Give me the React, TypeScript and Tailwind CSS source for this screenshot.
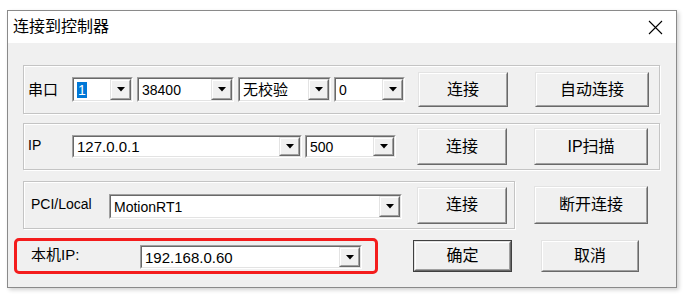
import type { ReactNode } from 'react';

const font = 'font-["Liberation_Sans","Noto_Sans_CJK_SC",sans-serif]';

function Arrow() {
  return (
    <svg width="8" height="5" viewBox="0 0 8 5">
      <polygon points="0,0 8,0 4,4.5" fill="#000" />
    </svg>
  );
}

// sunken classic combobox with a raised drop button
function Combo({ className, children }: { className: string; children: ReactNode }) {
  return (
    <div className={`${className} flex border border-t-[#a0a0a0] border-l-[#a0a0a0] border-b-white border-r-white`}>
      <div className="flex flex-1 border border-t-[#696969] border-l-[#696969] border-b-[#e3e3e3] border-r-[#e3e3e3] bg-white">
        <div className="flex flex-1 items-center overflow-hidden pl-[3px] text-black">{children}</div>
        <div className="flex w-[21px] border border-t-[#e3e3e3] border-l-[#e3e3e3] border-b-[#696969] border-r-[#696969]">
          <div className="flex flex-1 items-center justify-center border border-t-white border-l-white border-b-[#a0a0a0] border-r-[#a0a0a0] bg-[#f0f0f0]">
            <Arrow />
          </div>
        </div>
      </div>
    </div>
  );
}

function Btn({ className, children, def }: { className: string; children: ReactNode; def?: boolean }) {
  return (
    <div className={`${className} flex ${def ? 'border border-[#404040]' : ''}`}>
      <div className="flex flex-1 border border-t-[#e3e3e3] border-l-[#e3e3e3] border-b-[#696969] border-r-[#696969]">
        <div className="flex flex-1 items-center justify-center border border-t-white border-l-white border-b-[#a0a0a0] border-r-[#a0a0a0] bg-[#f0f0f0] text-[16px] leading-none text-black">
          {children}
        </div>
      </div>
    </div>
  );
}

const group = 'flex items-center border border-[#c4c4c4] shadow-[inset_1px_1px_0_#ffffff,1px_1px_0_#ffffff]';

export default function App() {
  return (
    <div className={`min-h-screen bg-white pt-[10px] pl-[7px] ${font}`}>
      <div className="flex h-[278px] w-[670px] flex-col border border-[#8a8a8a] shadow-[2px_2px_4px_rgba(0,0,0,0.18)]">
        {/* title bar */}
        <div className="flex h-[32px] items-center justify-between bg-white pl-[5px] pr-[13px]">
          <span className="text-[16px] leading-none text-black">连接到控制器</span>
          <svg width="15" height="15" viewBox="0 0 15 15">
            <path d="M1 1 L14 14 M14 1 L1 14" stroke="#000" strokeWidth="1.1" />
          </svg>
        </div>

        <div className="flex flex-1 flex-col bg-[#f0f0f0] pt-[22px]">
          {/* serial port */}
          <div className={`${group} ml-[15px] h-[49px] w-[637px] pl-[4px]`}>
            <span className="w-[44px] text-[15px] leading-none">串口</span>
            <Combo className="h-[25px] w-[61px]">
              <span className="bg-[#0078d7] px-[1px] text-[14px] leading-[16px] text-white">1</span>
            </Combo>
            <Combo className="ml-[4px] h-[25px] w-[97px]">
              <span className="text-[14px] leading-none">38400</span>
            </Combo>
            <Combo className="ml-[4px] h-[25px] w-[93px]">
              <span className="text-[15px] leading-none">无校验</span>
            </Combo>
            <Combo className="ml-[3px] h-[25px] w-[71px]">
              <span className="text-[14px] leading-none">0</span>
            </Combo>
            <Btn className="ml-[13px] h-[35px] w-[90px]">连接</Btn>
            <Btn className="ml-[27px] h-[35px] w-[114px]">自动连接</Btn>
          </div>

          {/* ethernet */}
          <div className={`${group} ml-[15px] mt-[9px] h-[47px] w-[637px] pl-[4px]`}>
            <span className="w-[44px] pb-[3px] text-[14px] leading-none">IP</span>
            <Combo className="h-[23px] w-[230px]">
              <span className="text-[15px] leading-none">127.0.0.1</span>
            </Combo>
            <Combo className="ml-[3px] h-[23px] w-[91px]">
              <span className="text-[14px] leading-none">500</span>
            </Combo>
            <Btn className="ml-[21px] h-[37px] w-[90px]">连接</Btn>
            <Btn className="ml-[27px] h-[37px] w-[114px]">IP扫描</Btn>
          </div>

          {/* pci / local */}
          <div className="ml-[15px] mt-[11px] flex items-center">
            <div className={`${group} h-[48px] w-[492px] pl-[7px]`}>
              <span className="w-[78px] pb-[3px] text-[14px] leading-none">PCI/Local</span>
              <Combo className="mt-[3px] h-[25px] w-[293px]">
                <span className="text-[14px] leading-none">MotionRT1</span>
              </Combo>
              <Btn className="ml-[15px] h-[37px] w-[90px]">连接</Btn>
            </div>
            <Btn className="ml-[19px] h-[38px] w-[114px]">断开连接</Btn>
          </div>

          {/* local ip */}
          <div className="ml-[6px] mt-[9px] flex items-center">
            <div className="flex h-[36px] w-[364px] items-center rounded-[5px] border-[3px] border-[#f41c1c] pl-[14px]">
              <span className="w-[109px] pb-[3px] text-[15px] leading-none">本机IP:</span>
              <Combo className="mt-[2px] h-[24px] w-[222px]">
                <span className="text-[15px] leading-none">192.168.0.60</span>
              </Combo>
            </div>
            <Btn def className="ml-[35px] h-[32px] w-[99px]">确定</Btn>
            <Btn className="ml-[29px] h-[32px] w-[98px]">取消</Btn>
          </div>
        </div>
      </div>
    </div>
  );
}
